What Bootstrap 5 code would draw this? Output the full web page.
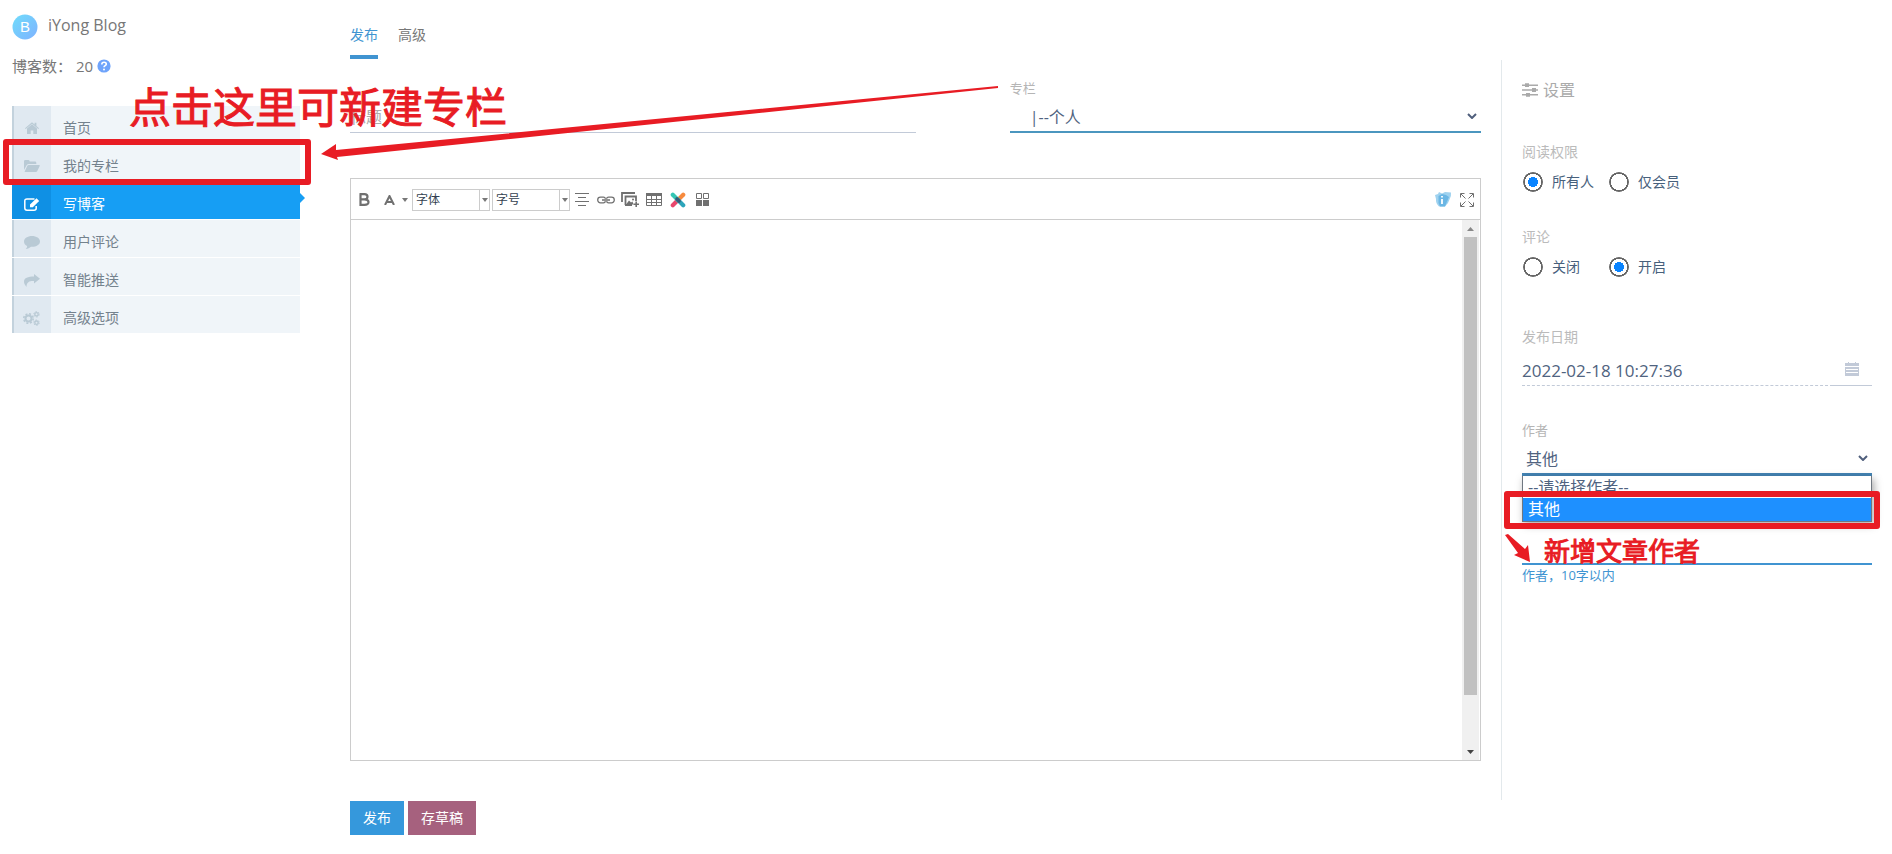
<!DOCTYPE html>
<html lang="zh-CN">
<head>
<meta charset="utf-8">
<meta name="viewport" content="width=device-width, initial-scale=1">
<title>写博客 - iYong Blog</title>
<link href="https://cdn.jsdelivr.net/npm/bootstrap@5.3.0/dist/css/bootstrap.min.css" rel="stylesheet">
<style>
body{font-family:"Open Sans","Noto Sans CJK SC",sans-serif;font-size:14px;line-height:20px;color:#777;background:#fff}
a{text-decoration:none;color:inherit}
svg{display:block;flex:none}
.layout{min-height:100vh}
/* sidebar */
.side{width:300px;padding-left:12px}
.brand{height:26px;margin-top:14px;gap:10px;color:#777}
.brand span{font-size:16px;line-height:20px;padding-bottom:4px}
.stats{margin-top:16px;height:20px;font-size:15px;color:#777;gap:4px}
.side-menu{margin-top:30px}
.side-menu li{position:relative;border-bottom:1px solid #fff}
.side-menu a{height:37px;background:#f0f5f9;color:#74828d}
.side-menu .ico{width:39px;background:#e0e9f1;border-left:2px solid #c3d2dd;color:#b9cad5;padding:7px 2px 0 0}
.side-menu .txt{padding:7px 12px 0}
.side-menu .on a{background:#169ef4;color:#fff}
.side-menu .on .ico{background:#0f90e4;border-color:#0f90e4;color:#fff}
.side-menu .on a::after{content:"";position:absolute;left:100%;top:11px;border:5px solid transparent;border-left-color:#169ef4;border-right:0}
/* main column */
.main{padding:25px 20px 0 50px;min-width:0}
.tabs{gap:20px}
.tabs a{height:34px}
.tabs .on{color:#4094d1;border-bottom:4px solid #4094d1}
.title-row{margin-top:19px}
.cap{font-size:13px;line-height:20px;color:#b5b5b5}
.cap-lg{font-size:14px;line-height:20px;color:#bbb}
.line-input{display:block;width:100%;border:0;border-bottom:1px solid #c2cad8;background:transparent;padding:2px 0 0;height:33px;font-size:16px;line-height:24px;color:#506380;outline:0;border-radius:0}
.line-input::placeholder{color:#aaa;opacity:1}
.line-select{appearance:none;border-bottom:2px solid #4b96bf;background:transparent url("data:image/svg+xml,%3Csvg xmlns='http://www.w3.org/2000/svg' width='10' height='6'%3E%3Cpath d='M1 1l4 4 4-4' fill='none' stroke='%23505f7c' stroke-width='2'/%3E%3C/svg%3E") no-repeat right 4px center}
.col-select{padding-left:20px;margin-top:2px}
.editor{margin-top:45px;border:1px solid #ccc}
.toolbar{height:41px;border-bottom:1px solid #ccc;padding:1px 1px 0}
.tool{width:24px;height:24px;border:0;background:none;padding:0;color:#707070;display:flex;align-items:center;justify-content:center}
.tool-wide{width:36px;gap:7px;padding-left:3px}
.combo{width:78px;height:22px;border:1px solid #ccc;background:#fff;padding:0;color:#333f50;font-size:12px;line-height:20px;display:flex;align-items:center}
.combo + .combo{margin-left:2px}
.combo span{flex:1;text-align:left;padding-left:3px}
.combo i{width:10px;height:20px;border-left:1px solid #ccc;display:flex;align-items:center;justify-content:center}
.tri{border:3px solid transparent;border-top:4px solid #777;border-bottom:0;width:0;height:0}
.edit-text{height:540px;border:0;resize:none;outline:0;padding:8px}
.bar{width:17px;margin-right:1px;background:#f0f0f0}
.bar .cap-btn{height:17px;display:flex;align-items:center;justify-content:center}
.bar .thumb{width:13px;height:458px;background:#c1c1c1}
.acts{margin-top:40px;gap:4px}
.acts .btn{border:0;border-radius:0;font-size:14px;line-height:20px;padding:7px 13px;color:#fff}
.b-pub{background:#3598dc}.b-draft{background:#a6617e}
/* settings */
.setting{width:391px;margin-top:60px;min-height:740px;border-left:1px solid #e3e9ec;padding:18px 20px 0;align-self:flex-start}
.setting h2{font-size:16px;line-height:24px;color:#aaa;font-weight:400;gap:5px;margin-bottom:40px}
.radios{margin-top:9px;margin-bottom:34px;height:22px}
.radios label{width:86px;gap:8px;color:#47607c;white-space:nowrap}
.radios input{appearance:none;width:22px;height:22px;border:1px solid #fff;border-radius:50%;margin:0;flex:none;background:radial-gradient(circle,transparent 0 8px,#666 8px 10px,transparent 10px)}
.radios input:checked{background:radial-gradient(circle,#0a84ff 0 5px,transparent 5px 8px,#666 8px 10px,transparent 10px)}
.radios-last{margin-bottom:49px}
.date{margin:6px 0 34px}
.date input{border-bottom-style:dashed;font-size:17px}
.date button{width:39px;border:0;border-bottom:1px solid #c2cad8;background:none;color:#c2cad8;padding:0 0 0 12px}
.author{position:relative}
.author select{height:34px;margin-top:2px;padding-left:4px;border-bottom:3px solid #4484b4}
.pop{position:absolute;top:100%;left:0;right:0;border:1px solid #6f7780;border-top:0;background:#fff;box-shadow:2px 3px 8px rgba(0,0,0,.35);font-size:16px;line-height:22px;color:#506380}
.pop li{height:22px;padding-left:5px}
.pop .sel{background:#1e90ff;color:#fff;height:23px}
.new-author{margin-top:54px;height:35px;border-bottom:2px solid #4094d1}
.hint{font-size:13px;color:#4094d1}
/* red annotations */
.frame{position:absolute;border:6px solid #e81c24;border-radius:3px;pointer-events:none}
.frame-menu{left:-9px;right:-11px;top:-5px;height:46px;z-index:2}
.pop .frame-pop{left:-19px;right:-9px;bottom:-8px;height:38px}
.note{position:absolute;color:#e81c24;font-weight:400;white-space:nowrap;pointer-events:none}
.note-col{left:129px;top:77px;font-size:42px;line-height:60px;-webkit-text-stroke:1px #e81c24}
.note-author{left:22px;top:3px;font-size:26px;line-height:36px;-webkit-text-stroke:1px #e81c24}
.arrow{position:absolute;pointer-events:none}
.arrow-col{left:320px;top:85px}
.arrow-author{left:-17px;top:2px}
</style>
</head>
<body>
<div class="layout d-flex position-relative">
  <nav class="side flex-shrink-0">
    <div class="brand d-flex align-items-center">
      <svg width="26" height="26" viewBox="0 0 26 26"><defs><linearGradient id="g" x1="0" y1="0" x2="1" y2="1"><stop offset="0" stop-color="#6fdcfb"/><stop offset="1" stop-color="#7fb2ff"/></linearGradient></defs><circle cx="13" cy="13" r="12.5" fill="url(#g)"/><text x="13" y="18" text-anchor="middle" font-family="Liberation Sans" font-size="15" fill="#fff">B</text></svg>
      <span>iYong Blog</span>
    </div>
    <div class="stats d-flex align-items-center">
      <span>博客数：</span><span class="d-flex align-items-center gap-1">20
      <svg width="14" height="14" viewBox="0 0 14 14"><circle cx="7" cy="7" r="6.6" fill="#6fa4fb"/><path d="M4.8 5.4c0-3 4.5-2.800 4.500-.2C9.300 6.700 7 6.700 7 8.300" fill="none" stroke="#fff" stroke-width="1.600"/><circle cx="7" cy="10.500" r="1" fill="#fff"/></svg></span>
    </div>
    <ul class="side-menu list-unstyled mb-0">
      <li><a href="#" class="d-flex"><span class="ico d-flex align-items-center justify-content-center"><svg width="14" height="12" viewBox="0 0 14 12" fill="currentColor"><path d="M7 2.300l5 4.200V12H8.300V8.500H5.700V12H2V6.500z"/><path d="M0 6.200L7 .2l2.600 2.200V.8h1.800v3.100L14 6.200l-.7.800L7 1.700.7 7z"/></svg></span><span class="txt d-flex align-items-center">首页</span></a></li>
      <li><a href="#" class="d-flex"><span class="ico d-flex align-items-center justify-content-center"><svg width="16" height="12" viewBox="0 0 16 12" fill="currentColor"><path d="M0 10V1.200Q0 0 1.200 0H4.500Q5.700 0 5.700 1.500H11q1.300 0 1.300 1.200V4H4.800Q3.500 4 2.600 5.200z"/><path d="M.5 12L3.200 6Q3.700 5 4.800 5H15.200q1 0 .5 1L13.300 11q-.5 1-1.600 1z"/></svg></span><span class="txt d-flex align-items-center">我的专栏</span></a><span class="frame frame-menu"></span></li>
      <li class="on"><a href="#" class="d-flex" aria-current="page"><span class="ico d-flex align-items-center justify-content-center"><svg width="16" height="13" viewBox="0 0 16 13" fill="none" stroke="currentColor"><path d="M10.500 1H3Q.8 1 .8 3v7Q.8 12.200 3 12.200h7q2.200 0 2.200-2V8" stroke-width="1.500"/><path d="M12.500.3l2.700 2.600-6.400 6.300H6V6.600z" fill="currentColor" stroke="none"/></svg></span><span class="txt d-flex align-items-center">写博客</span></a></li>
      <li><a href="#" class="d-flex"><span class="ico d-flex align-items-center justify-content-center"><svg width="16" height="13" viewBox="0 0 16 13" fill="currentColor"><path d="M8 0c4.400 0 8 2.300 8 5.400s-3.600 5.400-8 5.400h-1C5.600 12 4 12.800 1.800 13c.8-.8 1.300-1.800 1.300-3C1.200 9 0 7.300 0 5.400 0 2.300 3.600 0 8 0z"/></svg></span><span class="txt d-flex align-items-center">用户评论</span></a></li>
      <li><a href="#" class="d-flex"><span class="ico d-flex align-items-center justify-content-center"><svg width="16" height="13" viewBox="0 0 16 13" fill="currentColor"><path d="M10 0l6 4.800-6 4.700V7C6 6.800 2.500 7.500 2.500 13 .5 10.500 0 9 0 7.700 0 4 4 2.600 10 2.600z"/></svg></span><span class="txt d-flex align-items-center">智能推送</span></a></li>
      <li><a href="#" class="d-flex"><span class="ico d-flex align-items-center justify-content-center"><svg width="17" height="15" viewBox="0 0 17 15" fill="none" stroke="currentColor"><circle cx="5.500" cy="7.500" r="3" stroke-width="2"/><circle cx="5.500" cy="7.500" r="4.700" stroke-width="1.600" stroke-dasharray="2 1.690"/><circle cx="13.500" cy="3.300" r="1.700" stroke-width="1.400"/><circle cx="13.500" cy="3.300" r="2.700" stroke-width="1" stroke-dasharray="1.500 1.330"/><circle cx="13.500" cy="11.700" r="1.700" stroke-width="1.400"/><circle cx="13.500" cy="11.700" r="2.700" stroke-width="1" stroke-dasharray="1.500 1.330"/></svg></span><span class="txt d-flex align-items-center">高级选项</span></a></li>
    </ul>
  </nav>

  <main class="main flex-grow-1">
    <div class="tabs d-flex"><a href="#" class="on">发布</a><a href="#">高级</a></div>
    <form>
      <div class="title-row row g-0 align-items-end">
        <div class="col-6"><input class="line-input" type="text" placeholder="标题" aria-label="标题"></div>
        <div class="col-5 offset-1">
          <label class="cap d-block" for="column">专栏</label>
          <select id="column" class="line-input line-select col-select"><option>|--个人</option></select>
        </div>
      </div>
      <div class="editor">
        <div class="toolbar d-flex align-items-center">
          <button type="button" class="tool" aria-label="粗体"><svg width="12" height="13" viewBox="0 0 12 13"><path d="M1.500 1.200H6.500q3 0 3 2.600T6.500 6.400H2.500M6.500 6.400q4 0 4 2.700t-4 2.700H2.500V1.200" fill="none" stroke="currentColor" stroke-width="2.200"/></svg></button>
          <button type="button" class="tool tool-wide" aria-label="文字颜色"><svg width="11" height="10" viewBox="0 0 11 10"><path d="M1 10L5.500 1 10 10M2.500 7h6" fill="none" stroke="currentColor" stroke-width="2"/></svg><span class="tri"></span></button>
          <button type="button" class="combo"><span>字体</span><i><b class="tri"></b></i></button>
          <button type="button" class="combo"><span>字号</span><i><b class="tri"></b></i></button>
          <button type="button" class="tool" aria-label="对齐"><svg width="14" height="13" viewBox="0 0 14 13" fill="currentColor"><path d="M0 0h14v1H0zM3 4h8v1H3zM0 8h14v1H0zM3 12h8v1H3z"/></svg></button>
          <button type="button" class="tool" aria-label="链接"><svg width="18" height="8" viewBox="0 0 18 8" fill="none" stroke="currentColor" stroke-width="1.300"><path d="M8.500 2.800Q8 1.200 6.500 1.200H3.500a2.800 2.800 0 0 0 0 5.600H6.500Q8 6.800 8.500 5.200M9.500 2.800Q10 1.200 11.500 1.200h3a2.800 2.800 0 0 1 0 5.600H11.500Q10 6.800 9.500 5.200M5 4h8"/></svg></button>
          <button type="button" class="tool" aria-label="图片"><svg width="18" height="15" viewBox="0 0 18 15" fill="none" stroke="currentColor"><path d="M1 10V1h13M4.500 13V4.500H15V9M4 13h7" stroke-width="1.800"/><path d="M5 12.500l3-4 2 2 1.500-1 1 3z" fill="currentColor" stroke="none"/><circle cx="12" cy="7.500" r="1" fill="currentColor" stroke="none"/><path d="M15.200 9.500v5.500M12.500 12.300H18" stroke-width="1.600"/></svg></button>
          <button type="button" class="tool" aria-label="表格"><svg width="16" height="13" viewBox="0 0 16 13" fill="none" stroke="currentColor"><path d="M0 1.500h16" stroke-width="3"/><path d="M.5 3v9.500h15V3M.5 6.500h15M.5 9.500h15M5.500 3v9.500M10.500 3v9.500"/></svg></button>
          <button type="button" class="tool" aria-label="模板"><svg width="16" height="16" viewBox="0 0 16 16" fill="none" stroke-width="4.200" stroke-linecap="round"><path d="M2.800 13.200L8 8" stroke="#e8466c"/><path d="M8 8l5.200-5.200" stroke="#f78a3d"/><path d="M2.800 2.800L8 8" stroke="#35c6b4"/><path d="M8 8l5.200 5.200" stroke="#2da5bb"/><path d="M7 7l2 2" stroke="#365b78" stroke-width="3.600"/></svg></button>
          <button type="button" class="tool" aria-label="组件"><svg width="13" height="13" viewBox="0 0 13 13" fill="none" stroke="currentColor"><path d="M.5.500h5v5h-5zM7.500.500h5v5h-5z"/><path d="M0 7h6v6H0zM7 7h6v6H7z" fill="currentColor" stroke="none"/></svg></button>
          <button type="button" class="tool ms-auto" aria-label="帮助"><svg width="18" height="17" viewBox="0 0 18 17"><path d="M1 4l3-1 1-2 3 1.500L11 1l6 .5q.5 3-1.500 7-1 4-4.500 7H5Q1.500 12 2 8z" fill="#9fd2ef"/><path d="M4.500 5L8 3l4 1 3 2-4 9.500H6L4.500 12z" fill="#6ab6e4"/><path d="M8 5v1.500M8 8v5" stroke="#fff" stroke-width="1.800"/></svg></button>
          <button type="button" class="tool" aria-label="全屏"><svg width="14" height="14" viewBox="0 0 14 14" fill="none" stroke="currentColor"><path d="M.5 4.500V.5h4M9.500.5h4v4M13.500 9.500v4h-4M4.500 13.500h-4v-4M1 1l4.500 4.500M13 1L8.500 5.500M13 13L8.500 8.500M1 13l4.500-4.500"/></svg></button>
        </div>
        <div class="d-flex">
          <textarea class="edit-text flex-grow-1" aria-label="正文"></textarea>
          <div class="bar d-flex flex-column align-items-center">
            <span class="cap-btn"><svg width="7" height="4"><path d="M0 4L3.500 0 7 4z" fill="#888"/></svg></span>
            <span class="thumb"></span>
            <span class="cap-btn mt-auto"><svg width="7" height="4"><path d="M0 0h7L3.500 4z" fill="#444"/></svg></span>
          </div>
        </div>
      </div>
      <div class="acts d-flex"><button type="button" class="btn b-pub">发布</button><button type="button" class="btn b-draft">存草稿</button></div>
    </form>
  </main>

  <aside class="setting flex-shrink-0">
    <h2 class="d-flex align-items-center"><svg width="16" height="14" viewBox="0 0 16 14" fill="currentColor"><path d="M0 1.500h16V3H0zM0 6.300h16v1.500H0zM0 11h16v1.500H0z"/><path d="M3 .3h4v3.800H3zM10 5.100h4v3.800h-4zM4 9.900h4v3.800H4z"/></svg>设置</h2>
    <div class="cap-lg">阅读权限</div>
    <div class="radios d-flex">
      <label class="d-flex align-items-center"><input type="radio" name="read" checked>所有人</label>
      <label class="d-flex align-items-center"><input type="radio" name="read">仅会员</label>
    </div>
    <div class="cap-lg">评论</div>
    <div class="radios radios-last d-flex">
      <label class="d-flex align-items-center"><input type="radio" name="comment">关闭</label>
      <label class="d-flex align-items-center"><input type="radio" name="comment" checked>开启</label>
    </div>
    <label class="cap-lg d-block" for="date">发布日期</label>
    <div class="date d-flex">
      <input id="date" class="line-input" type="text" value="2022-02-18 10:27:36">
      <button type="button" class="flex-shrink-0" aria-label="选择日期"><svg width="14" height="14" viewBox="0 0 14 14"><path d="M0 1h3V0h1v1h6V0h1v1h3v13H0z" fill="currentColor"/><path d="M0 4.500h14M1 7.500h12M1 10.500h12" stroke="#fff"/></svg></button>
    </div>
    <div class="author">
      <label class="cap d-block" for="author">作者</label>
      <select id="author" class="line-input line-select"><option>其他</option></select>
      <ul class="pop list-unstyled mb-0" role="listbox" aria-label="作者"><li role="option">--请选择作者--</li><li role="option" class="sel" aria-selected="true">其他</li><li class="frame frame-pop" role="presentation"></li></ul>
    </div>
    <div class="position-relative">
      <input id="newAuthor" class="line-input new-author" type="text">
      <span class="note note-author">新增文章作者</span>
      <svg class="arrow arrow-author" width="26" height="32" viewBox="0 0 26 32"><path d="M0 3l3-1L20 17l3-4 2 17-16-7 4-2z" fill="#e81c24"/></svg>
    </div>
    <label class="hint" for="newAuthor">作者，10字以内</label>
  </aside>

  <span class="note note-col">点击这里可新建专栏</span>
  <svg class="arrow arrow-col" width="680" height="80" viewBox="0 0 680 80"><path d="M678 1v2L17 72l1 3L1 69l15-10v6z" fill="#e81c24"/></svg>
</div>
<script src="https://cdn.jsdelivr.net/npm/bootstrap@5.3.0/dist/js/bootstrap.bundle.min.js"></script>
</body>
</html>
